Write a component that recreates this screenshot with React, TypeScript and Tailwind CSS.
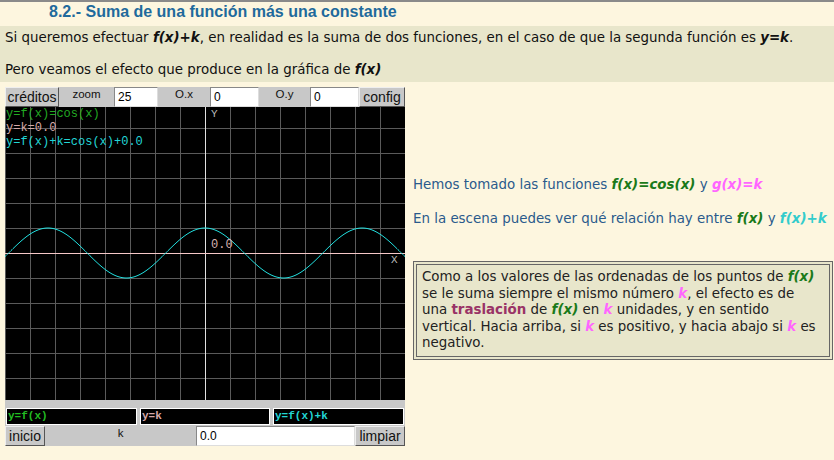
import React from "react";

const G = "#1a7a1a";
const M = "#ff66ff";
const C = "#33cccc";

function Btn({ label, w }: { label: string; w: string }) {
  return (
    <div
      className={`${w} h-full flex items-center justify-center bg-[#c8c8c8] border border-t-[#eeeeee] border-l-[#eeeeee] border-r-[#555] border-b-[#555] text-[14px] text-[#111]`}
      style={{ fontFamily: "'Liberation Sans', Arial, sans-serif" }}
    >
      {label}
    </div>
  );
}

function Lbl({ label, w }: { label: string; w: string }) {
  return (
    <div
      className={`${w} h-full flex justify-center bg-[#c8c8c8] text-[11.5px] leading-[13px] pt-[1px] text-[#111]`}
      style={{ fontFamily: "'Liberation Sans', Arial, sans-serif" }}
    >
      {label}
    </div>
  );
}

function Inp({ v, w }: { v: string; w: string }) {
  return (
    <div
      className={`${w} h-full flex items-center bg-white border border-t-[#888] border-l-[#888] border-r-[#ddd] border-b-[#ddd] pl-[3px] text-[12px] text-black`}
      style={{ fontFamily: "'Liberation Sans', Arial, sans-serif" }}
    >
      {v}
    </div>
  );
}

function Canvas() {
  const W = 400;
  const H = 293;
  const ox = 200;
  const oy = 146;
  const vl: number[] = [];
  for (let x = 0; x <= W; x += 25) vl.push(x);
  const hl: number[] = [];
  for (let y = oy % 25; y <= H; y += 25) hl.push(y);
  let d = "";
  for (let x = 0; x <= W; x += 1) {
    const y = oy - 25 * Math.cos((x - ox) / 25);
    d += `${x === 0 ? "M" : "L"}${x},${y.toFixed(2)} `;
  }
  const mono = "'Liberation Mono', 'Courier New', monospace";
  return (
    <svg width={W} height={H} className="block bg-black">
      {vl.map((x) => (
        <line key={"v" + x} x1={x + 0.5} y1={0} x2={x + 0.5} y2={H} stroke="#5a5a5a" strokeWidth={1} />
      ))}
      {hl.map((y) => (
        <line key={"h" + y} x1={0} y1={y + 0.5} x2={W} y2={y + 0.5} stroke="#5a5a5a" strokeWidth={1} />
      ))}
      <line x1={ox + 0.5} y1={0} x2={ox + 0.5} y2={H} stroke="#e0e0e0" strokeWidth={1} />
      <line x1={0} y1={oy + 0.5} x2={W} y2={oy + 0.5} stroke="#f6c8c8" strokeWidth={1} />
      <path d={d} fill="none" stroke="#22e0e0" strokeWidth={1} />
      <text x={1} y={10} fontFamily={mono} fontSize="12" fill="#22aa22">y=f(x)=cos(x)</text>
      <text x={1} y={24} fontFamily={mono} fontSize="12" fill="#d6a8a8">y=k=0.0</text>
      <text x={1} y={38} fontFamily={mono} fontSize="12" fill="#22d6d6">y=f(x)+k=cos(x)+0.0</text>
      <text x={206} y={10} fontFamily={mono} fontSize="11" fill="#bbbbbb">Y</text>
      <text x={206} y={141} fontFamily={mono} fontSize="12" fill="#d6b0b0">0.0</text>
      <text x={386} y={156} fontFamily={mono} fontSize="11" fill="#bbbbbb">X</text>
    </svg>
  );
}

function FBox({ label, color, w }: { label: string; color: string; w: string }) {
  return (
    <div
      className={`${w} h-[17px] bg-black border border-white flex items-center pl-[1px] text-[11px] font-bold`}
      style={{ color, fontFamily: "'Liberation Mono', 'Courier New', monospace" }}
    >
      {label}
    </div>
  );
}

function B({ c, children }: { c: string; children: React.ReactNode }) {
  return (
    <b className="italic font-bold" style={{ color: c }}>
      {children}
    </b>
  );
}

export default function App() {
  return (
    <div
      className="w-[834px] h-[460px] overflow-hidden bg-[#fdf6df] border-t-2 border-[#8a8a8a] text-[13.4px] text-[#111]"
      style={{ fontFamily: "'DejaVu Sans', Verdana, sans-serif" }}
    >
      <div
        className="h-[24px] pl-[49px] text-[16px] font-bold text-[#1f6a9c] leading-[20px]"
        style={{ fontFamily: "'Liberation Sans', Arial, sans-serif" }}
      >
        8.2.- Suma de una función más una constante
      </div>
      <div className="h-[56px] bg-[#e8e6cb] pl-[5px] pt-[4px] leading-[16px] whitespace-nowrap">
        <div>
          Si queremos efectuar <B c="#111">f(x)+k</B>, en realidad es la suma de dos funciones, en el caso de que la
          segunda función es <B c="#111">y=k</B>.
        </div>
        <div className="mt-[16px]">
          Pero veamos el efecto que produce en la gráfica de <B c="#111">f(x)</B>
        </div>
      </div>
      <div className="flex mt-[5px]">
        <div className="ml-[5px] w-[400px] shrink-0 flex flex-col bg-[#c8c8c8]">
          <div className="h-[20px] flex">
            <Btn label="créditos" w="w-[54px]" />
            <Lbl label="zoom" w="w-[55px]" />
            <Inp v="25" w="w-[44px]" />
            <Lbl label="O.x" w="w-[52px]" />
            <Inp v="0" w="w-[49px]" />
            <Lbl label="O.y" w="w-[51px]" />
            <Inp v="0" w="w-[49px]" />
            <Btn label="config" w="w-[46px]" />
          </div>
          <Canvas />
          <div className="h-[26px] flex items-end pb-[1px] pl-[1px] gap-[3px]">
            <FBox label="y=f(x)" color="#22bb22" w="w-[131px]" />
            <FBox label="y=k" color="#d6a8a8" w="w-[130px]" />
            <FBox label="y=f(x)+k" color="#22d6d6" w="w-[131px]" />
          </div>
          <div className="h-[20px] flex">
            <Btn label="inicio" w="w-[40px]" />
            <Lbl label="k" w="w-[151px]" />
            <Inp v="0.0" w="w-[159px]" />
            <Btn label="limpiar" w="w-[50px]" />
          </div>
        </div>
        <div className="ml-[8px] flex-1 pr-[1px]">
          <div className="mt-[90px] text-[#2a5a8c] leading-[16px] whitespace-nowrap">
            Hemos tomado las funciones <B c={G}>f(x)=cos(x)</B> y <B c={M}>g(x)=k</B>
          </div>
          <div className="mt-[18px] text-[#2a5a8c] leading-[16px] whitespace-nowrap">
            En la escena puedes ver qué relación hay entre <B c={G}>f(x)</B> y <B c={C}>f(x)+k</B>
          </div>
          <div className="mt-[34px] w-[420px] border-[4px] border-double border-[#666] bg-[#e8e6cb] px-[5px] pt-[4px] pb-[4px] leading-[16.5px] text-[#222] whitespace-nowrap">
            Como a los valores de las ordenadas de los puntos de <B c={G}>f(x)</B>
            <br />
            se le suma siempre el mismo número <B c={M}>k</B>, el efecto es de
            <br />
            una <b className="text-[#993366]">traslación</b> de <B c={G}>f(x)</B> en <B c={M}>k</B> unidades, y en sentido
            <br />
            vertical. Hacia arriba, si <B c={M}>k</B> es positivo, y hacia abajo si <B c={M}>k</B> es
            <br />
            negativo.
          </div>
        </div>
      </div>
    </div>
  );
}
